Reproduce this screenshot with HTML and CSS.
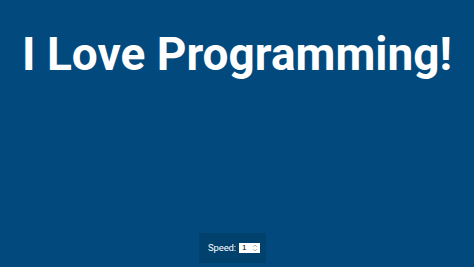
FILE: index.html
```html
<!DOCTYPE html>
<html lang="en">
<head>
  <meta charset="UTF-8" />
  <title>I Love Programming</title>
  <meta name="viewport" content="width=device-width, initial-scale=1.0" />
  <link rel="stylesheet" href="styles.css">
</head>
<body>
  <div class="page">
    <h1 class="title">I Love Programming!</h1>

    <div class="controls">
      <label for="speed">Speed:</label>
      <div class="num-input">
        <input type="text" id="speed" value="1" />
        <span class="spin">
          <svg width="6" height="8" viewBox="0 0 6 8">
            <path d="M1 3 L3 1 L5 3" fill="none" stroke="#b9b9c4" stroke-width="1" />
            <path d="M1 5 L3 7 L5 5" fill="none" stroke="#b9b9c4" stroke-width="1" />
          </svg>
        </span>
      </div>
    </div>
  </div>
</body>
</html>
```

FILE: styles.css
```css
body {
  margin: 0;
  background: #024a7e;
  font-family: Roboto, 'Noto Sans', sans-serif;
  color: #fff;
}

.page {
  min-height: 100vh;
  display: flex;
  flex-direction: column;
  align-items: center;
  box-sizing: border-box;
  padding-bottom: 4px;
}

.title {
  margin: 27px 0 0;
  font-size: 46px;
  font-weight: 700;
  line-height: 54px;
  text-align: center;
}

.controls {
  margin-top: auto;
  margin-right: 9px;
  display: flex;
  align-items: center;
  gap: 3px;
  padding: 9px 6px 10px 9px;
  background: rgba(0, 0, 0, 0.12);
  font-size: 9.5px;
  letter-spacing: -0.15px;
}

.num-input {
  display: flex;
  align-items: center;
  justify-content: space-between;
  background: #fff;
  height: 10px;
  width: 21px;
  padding: 0 2px 0 3px;
  box-sizing: border-box;
}

.num-input input {
  width: 8px;
  border: none;
  padding: 0;
  font-size: 8px;
  font-family: 'Liberation Sans', sans-serif;
  color: #000;
  outline: none;
  background: transparent;
}

.spin {
  display: flex;
  align-items: center;
}
```
